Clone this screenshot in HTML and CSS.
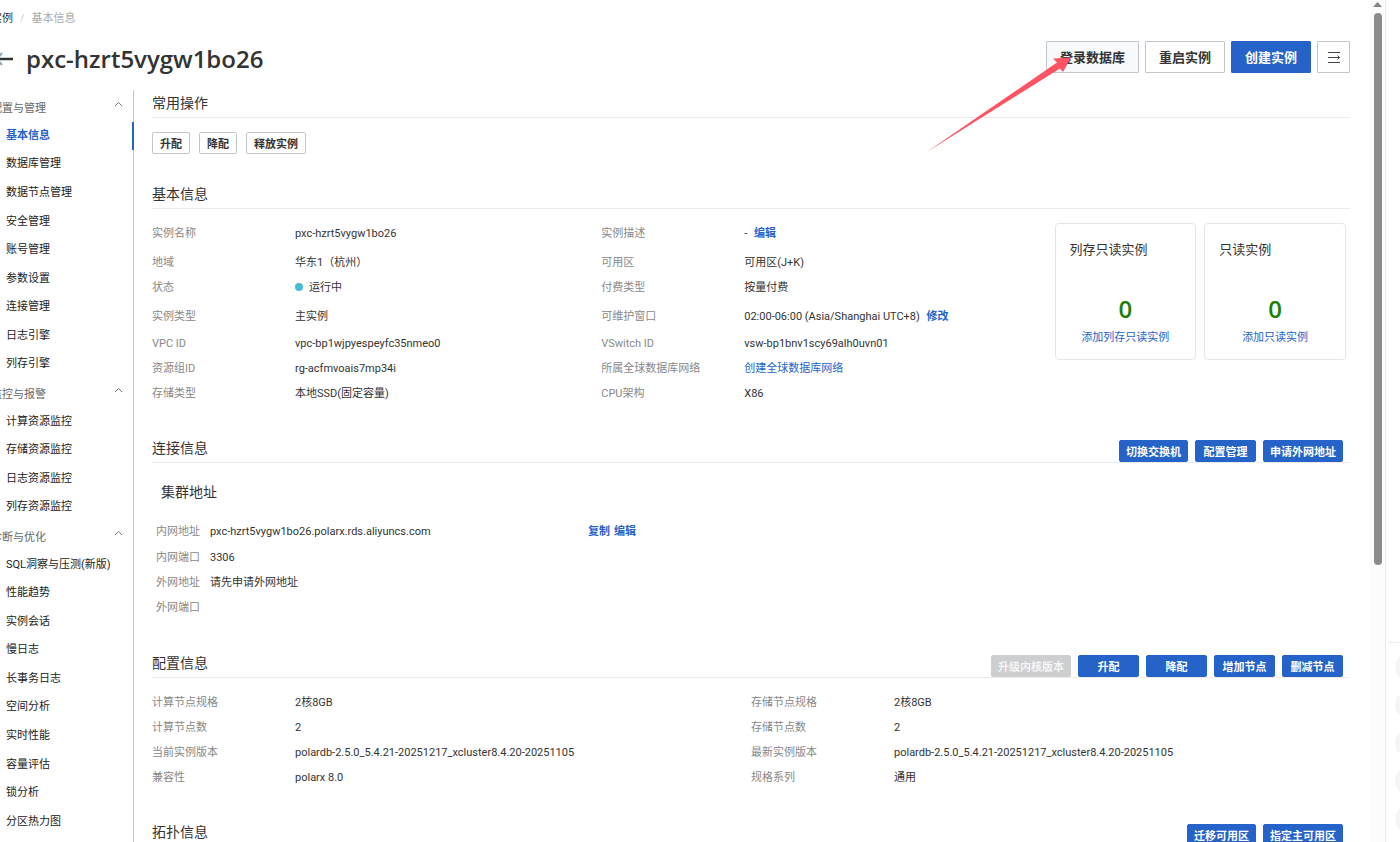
FILE: index.html
```html
<!DOCTYPE html>
<html lang="zh-CN">
<head>
    <meta charset="UTF-8">
    <meta name="viewport" content="width=device-width, initial-scale=1.0">
    <title>pxc-hzrt5vygw1bo26 - 基本信息</title>
    <link rel="stylesheet" href="styles.css">
</head>
<body>
    <div class="console">
        <header class="page-header">
            <nav class="breadcrumb">
                <a href="#">实例</a>
                <span class="separator">/</span>
                <span class="current">基本信息</span>
            </nav>
            <div class="title-bar">
                <a class="back" href="#" aria-label="返回">
                    <svg width="22" height="20" viewBox="0 0 22 20" fill="none" stroke-width="2">
                        <path d="M11 4L6 10l5 6" stroke="#8fa9bd" />
                        <path d="M22 10H9" stroke="#333" stroke-width="2.500" />
                    </svg>
                </a>
                <h1>pxc-hzrt5vygw1bo26</h1>
                <div class="page-actions">
                    <button class="btn-large hovered">登录数据库</button>
                    <button class="btn-large">重启实例</button>
                    <button class="btn-large primary">创建实例</button>
                    <button class="btn-large icon-only" aria-label="更多">
                        <svg width="14" height="13" viewBox="0 0 14 13" fill="none" stroke="#444">
                            <path d="M1 1.500h12M1 6.500h12M1 11.500h12" />
                            <path d="M10.500 4.500l2 2-2 2" />
                        </svg>
                    </button>
                    <svg class="pointer-arrow" width="148" height="98" viewBox="0 0 148 98">
                        <path d="M146 2.500L128 3.500l4 4L1 97.500 135 13.500l3 3.500z" fill="#ff5364" />
                    </svg>
                </div>
            </div>
        </header>

        <div class="body">
            <nav class="sidebar">
                <button class="menu-group">配置与管理<svg width="9" height="6" viewBox="0 0 9 6"><path d="M1 5l3.500-3.500L8 5" /></svg></button>
                <a class="active" href="#">基本信息</a>
                <a href="#">数据库管理</a>
                <a href="#">数据节点管理</a>
                <a href="#">安全管理</a>
                <a href="#">账号管理</a>
                <a href="#">参数设置</a>
                <a href="#">连接管理</a>
                <a href="#">日志引擎</a>
                <a href="#">列存引擎</a>
                <button class="menu-group">监控与报警<svg width="9" height="6" viewBox="0 0 9 6"><path d="M1 5l3.500-3.500L8 5" /></svg></button>
                <a href="#">计算资源监控</a>
                <a href="#">存储资源监控</a>
                <a href="#">日志资源监控</a>
                <a href="#">列存资源监控</a>
                <button class="menu-group">诊断与优化<svg width="9" height="6" viewBox="0 0 9 6"><path d="M1 5l3.500-3.500L8 5" /></svg></button>
                <a href="#">SQL洞察与压测(新版)</a>
                <a href="#">性能趋势</a>
                <a href="#">实例会话</a>
                <a href="#">慢日志</a>
                <a href="#">长事务日志</a>
                <a href="#">空间分析</a>
                <a href="#">实时性能</a>
                <a href="#">容量评估</a>
                <a href="#">锁分析</a>
                <a href="#">分区热力图</a>
            </nav>

            <main class="content">
                <section class="operations">
                    <div class="section-head">
                        <h2>常用操作</h2>
                    </div>
                    <div class="button-row">
                        <button class="btn">升配</button>
                        <button class="btn">降配</button>
                        <button class="btn">释放实例</button>
                    </div>
                </section>

                <section class="basic">
                    <div class="section-head">
                        <h2>基本信息</h2>
                    </div>
                    <div class="basic-body">
                        <dl class="info-grid basic-grid">
                            <dt>实例名称</dt>
                            <dd>pxc-hzrt5vygw1bo26</dd>
                            <dt>实例描述</dt>
                            <dd>- <button class="link-btn">编辑</button></dd>
                            <dt>地域</dt>
                            <dd>华东1（杭州）</dd>
                            <dt>可用区</dt>
                            <dd>可用区(J+K)</dd>
                            <dt>状态</dt>
                            <dd><span class="status-dot"></span>运行中</dd>
                            <dt>付费类型</dt>
                            <dd>按量付费</dd>
                            <dt>实例类型</dt>
                            <dd>主实例</dd>
                            <dt>可维护窗口</dt>
                            <dd>02:00-06:00 (Asia/Shanghai UTC+8) <button class="link-btn">修改</button></dd>
                            <dt>VPC ID</dt>
                            <dd>vpc-bp1wjpyespeyfc35nmeo0</dd>
                            <dt>VSwitch ID</dt>
                            <dd>vsw-bp1bnv1scy69alh0uvn01</dd>
                            <dt>资源组ID</dt>
                            <dd>rg-acfmvoais7mp34i</dd>
                            <dt>所属全球数据库网络</dt>
                            <dd><a href="#">创建全球数据库网络</a></dd>
                            <dt>存储类型</dt>
                            <dd>本地SSD(固定容量)</dd>
                            <dt>CPU架构</dt>
                            <dd>X86</dd>
                        </dl>
                        <div class="cards">
                            <div class="card">
                                <h3>列存只读实例</h3>
                                <p class="count">0</p>
                                <a href="#">添加列存只读实例</a>
                            </div>
                            <div class="card">
                                <h3>只读实例</h3>
                                <p class="count">0</p>
                                <a href="#">添加只读实例</a>
                            </div>
                        </div>
                    </div>
                </section>

                <section class="connection">
                    <div class="section-head">
                        <h2>连接信息</h2>
                        <div class="head-actions">
                            <button class="btn primary">切换交换机</button>
                            <button class="btn primary">配置管理</button>
                            <button class="btn primary">申请外网地址</button>
                        </div>
                    </div>
                    <h3 class="sub-title">集群地址</h3>
                    <dl class="info-grid address-grid">
                        <dt>内网地址</dt>
                        <dd>pxc-hzrt5vygw1bo26.polarx.rds.aliyuncs.com</dd>
                        <dd class="address-actions"><button class="link-btn">复制</button><button class="link-btn">编辑</button></dd>
                        <dt>内网端口</dt>
                        <dd>3306</dd>
                        <dt>外网地址</dt>
                        <dd>请先申请外网地址</dd>
                        <dt>外网端口</dt>
                        <dd></dd>
                    </dl>
                </section>

                <section class="config">
                    <div class="section-head">
                        <h2>配置信息</h2>
                        <div class="head-actions">
                            <button class="btn primary" disabled>升级内核版本</button>
                            <button class="btn primary">升配</button>
                            <button class="btn primary">降配</button>
                            <button class="btn primary">增加节点</button>
                            <button class="btn primary">删减节点</button>
                        </div>
                    </div>
                    <dl class="info-grid config-grid">
                        <dt>计算节点规格</dt>
                        <dd>2核8GB</dd>
                        <dt>存储节点规格</dt>
                        <dd>2核8GB</dd>
                        <dt>计算节点数</dt>
                        <dd>2</dd>
                        <dt>存储节点数</dt>
                        <dd>2</dd>
                        <dt>当前实例版本</dt>
                        <dd>polardb-2.5.0_5.4.21-20251217_xcluster8.4.20-20251105</dd>
                        <dt>最新实例版本</dt>
                        <dd>polardb-2.5.0_5.4.21-20251217_xcluster8.4.20-20251105</dd>
                        <dt>兼容性</dt>
                        <dd>polarx 8.0</dd>
                        <dt>规格系列</dt>
                        <dd>通用</dd>
                    </dl>
                </section>

                <section class="topology">
                    <div class="section-head">
                        <h2>拓扑信息</h2>
                        <div class="head-actions">
                            <button class="btn primary">迁移可用区</button>
                            <button class="btn primary">指定主可用区</button>
                        </div>
                    </div>
                </section>
            </main>
        </div>
    </div>

    <div class="scrollbar">
        <svg width="9" height="5" viewBox="0 0 9 5"><path d="M0 5L4.500 0 9 5z" fill="#858585" /></svg>
        <div class="thumb"></div>
    </div>

    <aside class="tool-rail">
        <div class="tools">
            <span></span>
            <span></span>
            <span></span>
            <span></span>
            <span></span>
        </div>
    </aside>
</body>
</html>
```

FILE: styles.css
```css
* {
    margin: 0;
    padding: 0;
    box-sizing: border-box;
}

body {
    display: flex;
    height: 100vh;
    overflow: hidden;
    background-color: #fff;
    color: #333;
    font-family: Roboto, 'Noto Sans CJK SC', sans-serif;
    font-size: 11px;
    line-height: 16px;
}

button {
    font-family: inherit;
    cursor: pointer;
}

a {
    color: #2563c9;
    text-decoration: none;
}

h1,
h2,
h3 {
    font-weight: 400;
}

/* the console is scrolled a little to the right */
.console {
    flex: 1;
    display: flex;
    flex-direction: column;
    min-width: 0;
    margin-left: -9px;
}

/* header */
.page-header {
    flex: none;
    padding: 11px 20px 0 0;
}

.breadcrumb {
    display: flex;
    gap: 7px;
}

.breadcrumb a {
    color: #333;
}

.breadcrumb .separator {
    color: #ccc;
}

.breadcrumb .current {
    color: #aaa;
}

.title-bar {
    display: flex;
    align-items: center;
    height: 63px;
}

.back {
    display: flex;
    margin-right: 13px;
}

.title-bar h1 {
    font-family: 'Open Sans', sans-serif;
    font-size: 24px;
    font-weight: 600;
    line-height: 32px;
}

.page-actions {
    position: relative;
    display: flex;
    gap: 6px;
    margin: 0 0 3px auto;
}

.btn-large {
    height: 32px;
    padding: 0 13px 2px;
    border: 1px solid #c0c6cc;
    border-radius: 1px;
    background-color: #fff;
    color: #333;
    font-size: 13px;
    font-weight: 700;
}

.btn-large.hovered {
    background-color: #f7f9fa;
}

.btn-large.primary {
    border-color: #2563c9;
    background-color: #2563c9;
    color: #fff;
}

.btn-large.icon-only {
    display: flex;
    align-items: center;
    justify-content: center;
    width: 33px;
    padding: 0;
}

.pointer-arrow {
    position: absolute;
    top: 14px;
    right: 277px;
    pointer-events: none;
}

/* sidebar */
.body {
    flex: 1;
    display: flex;
    min-height: 0;
}

.sidebar {
    flex: none;
    display: grid;
    grid-auto-rows: 1fr;
    width: 143px;
    padding: 3px 0 6px;
    border-right: 1px solid #c0c6cc;
}

.sidebar a,
.menu-group {
    display: flex;
    align-items: center;
}

.sidebar a {
    margin-right: -1px;
    padding-left: 15px;
    color: #222;
}

.sidebar a.active {
    border-right: 2px solid #2563c9;
    color: #2563c9;
    font-weight: 700;
}

.menu-group {
    justify-content: space-between;
    padding-right: 10px;
    border: none;
    background: none;
    color: #666;
    font-size: 11px;
}

.menu-group svg {
    margin-bottom: 6px;
    fill: none;
    stroke: #777;
}

/* content */
.content {
    flex: 1;
    min-width: 0;
    padding: 0 20px 0 18px;
}

.section-head {
    display: flex;
    align-items: center;
    justify-content: space-between;
    height: 28px;
    padding-bottom: 2px;
    border-bottom: 1px solid #ebebeb;
}

.section-head h2,
.sub-title {
    font-size: 14px;
    line-height: 20px;
}

.head-actions {
    display: flex;
    gap: 7px;
    margin: 7px 7px 0 0;
}

.button-row {
    display: flex;
    gap: 9px;
    margin-top: 14px;
}

.btn {
    height: 22px;
    padding: 0 7px 1px;
    border: 1px solid #c0c6cc;
    border-radius: 2px;
    background-color: #fff;
    color: #333;
    font-size: 11px;
    font-weight: 700;
}

.btn.primary {
    min-width: 61px;
    padding: 0 6px;
    border-color: #2563c9;
    background-color: #2563c9;
    color: #fff;
}

.btn.primary:disabled {
    border-color: #ccced0;
    background-color: #ccced0;
    color: #f5f5f5;
}

.link-btn {
    border: none;
    background: none;
    color: #2563c9;
    font-size: 11px;
    font-weight: 700;
    line-height: 16px;
}

.info-grid {
    display: grid;
    grid-auto-rows: 25px;
    line-height: 25px;
}

.info-grid dt {
    color: #888;
}

.info-grid .link-btn {
    margin-left: 4px;
}

.basic {
    margin-top: 27px;
}

.basic-body {
    display: flex;
    margin-top: 12px;
}

.basic-grid {
    width: 75%;
    grid-template-columns: 143px 1fr 143px 1fr;
    grid-template-rows: 29px 25px 29px 27px;
}

.status-dot {
    display: inline-block;
    width: 8px;
    height: 8px;
    margin-right: 6px;
    border-radius: 50%;
    background-color: #45bbd5;
}

.cards {
    display: flex;
    align-items: flex-start;
    gap: 8px;
    width: 25%;
    padding: 2px 4px 0;
}

.card {
    flex: 1;
    height: 137px;
    padding: 16px 14px;
    border: 1px solid #e6e6e6;
    border-radius: 4px;
    text-align: center;
}

.card h3 {
    font-size: 13px;
    line-height: 20px;
    text-align: left;
}

.count {
    margin: 33px 0 5px;
    color: #1c8000;
    font-family: 'Open Sans', sans-serif;
    font-size: 24px;
    font-weight: 600;
    line-height: 32px;
}

.connection,
.topology {
    margin-top: 29px;
}

.sub-title {
    margin: 19px 0 17px 9px;
}

.address-grid {
    grid-template-columns: 54px 374px 1fr;
    grid-template-rows: 26px;
    padding-left: 4px;
}

.address-grid dt {
    grid-column: 1;
}

.config {
    margin-top: 30px;
}

.config-grid {
    grid-template-columns: 143px 1fr 143px 1fr;
    margin-top: 12px;
}

/* scrollbar and right rail */
.scrollbar {
    flex: none;
    display: flex;
    flex-direction: column;
    align-items: center;
    gap: 6px;
    width: 15px;
    padding: 2px 0;
    background-color: #fcfcfc;
}

.thumb {
    width: 8px;
    height: 552px;
    border-radius: 4px;
    background-color: #8b8b8b;
}

.tool-rail {
    flex: none;
    display: flex;
    flex-direction: column;
    justify-content: flex-end;
    width: 15px;
    padding-left: 2px;
    border-left: 1px solid #ececec;
    overflow: hidden;
}

.tools {
    display: flex;
    flex-direction: column;
    gap: 10px;
    padding: 10px 0 9px 7px;
    border-top: 1px solid #ececec;
}

.tools span {
    width: 28px;
    height: 28px;
    border-radius: 50%;
    background-color: #f5f5f6;
}
```
